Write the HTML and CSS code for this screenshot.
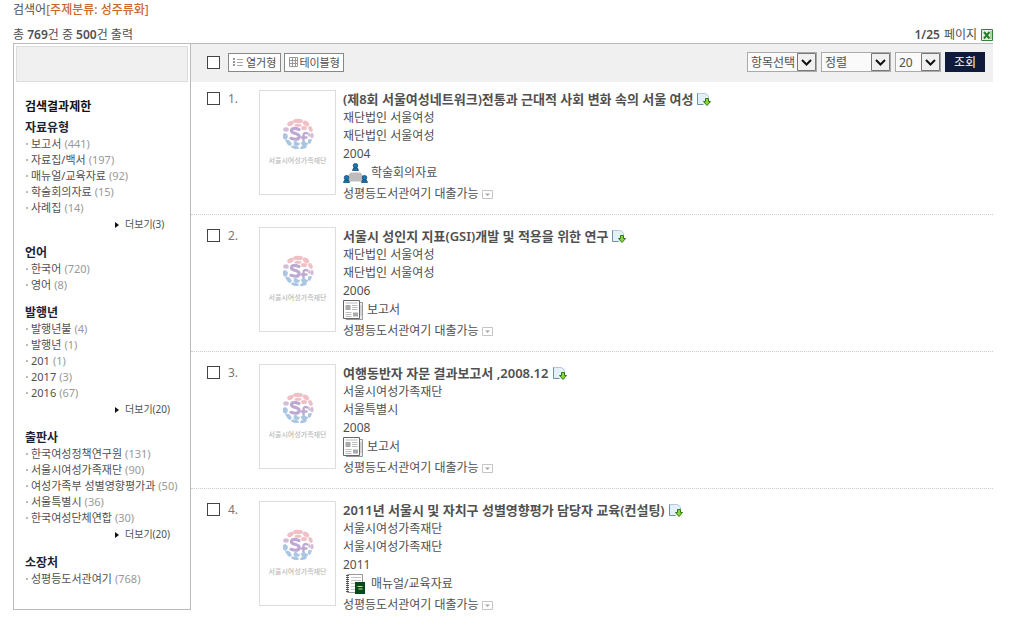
FILE: index.html
```html
<!DOCTYPE html>
<html lang="ko">
<head>
    <meta charset="UTF-8">
    <meta name="viewport" content="width=device-width, initial-scale=1.0">
    <title>검색결과</title>
    <link rel="stylesheet" href="styles.css">
</head>
<body>
    <!-- 아이콘 -->
    <svg class="sprite" aria-hidden="true">
        <symbol id="ico-export" viewBox="0 0 14 14">
            <path d="M.5 1.500h11v11H.5z" fill="#e3f0f8"/>
            <path d="M.5 1v11.500h6" fill="none" stroke="#6f8da5"/>
            <path d="M.5 1.500h8l3 3v2" fill="none" stroke="#b5cad8"/>
            <path d="M8.500 6.500h3v3h2l-3.500 4-3.500-4h2z" fill="#8bd63a" stroke="#2c7a12"/>
        </symbol>
        <symbol id="ico-down" viewBox="0 0 11 9">
            <path d="M.5.5h10v8H.5z" fill="#fff" stroke="#c4c4c4"/>
            <path d="M3 3.500h5L5.500 6z" fill="#a5a5a5"/>
        </symbol>
        <symbol id="ico-report" viewBox="0 0 21 20">
            <path d="M16 2.500h3.500v17H3" fill="#eee" stroke="#999"/>
            <path d="M.5.5h16v18H.5z" fill="#fff" stroke="#666"/>
            <path d="M2.500 5h5v5h-5zM10 12.500h5v4h-5z" fill="#aaa"/>
            <path d="M2.500 3h12M9 5.500h5.500M9 7.500h5.500M9 9.500h5.500M2.500 12.500h6M2.500 14.500h6M2.500 16.500h6M18 5v11" stroke="#bbb"/>
        </symbol>
        <symbol id="ico-meeting" viewBox="0 0 25 20">
            <path d="M7.500 9.500h10l4 5-2 4h-14l-2-4z" fill="#bdbdbd"/>
            <g id="person" fill="#1878b4" stroke="#0d3d62" stroke-width=".7">
                <path d="M9.500 7.500q.3-3 3-3t3 3z"/>
                <circle cx="12.500" cy="2.700" r="2.300"/>
            </g>
            <use href="#person" x="-9" y="12"/>
            <use href="#person" x="9" y="12"/>
        </symbol>
        <symbol id="ico-manual" viewBox="0 0 25 20">
            <path d="M4.500.5h15v18h-15z" fill="#fff" stroke="#999"/>
            <path d="M4.500 1v18" stroke="#555" stroke-width="3" stroke-dasharray="1 1"/>
            <path d="M8 3.500h10M8 6.500h10M8 9.500h4M8 12.500h4M8 15.500h4" stroke="#c4c4c4"/>
            <path d="M12 8h10v12H12z" fill="#064a1c"/>
            <path d="M14.500 12.500h5M15.500 15h4" stroke="#c8e08a"/>
        </symbol>
        <symbol id="logo" viewBox="0 0 32 32">
            <g fill="#f0c0c6">
                <ellipse cx="16" cy="3" rx="5" ry="2.200"/>
                <ellipse cx="8.500" cy="5.500" rx="3.500" ry="2.300" transform="rotate(-30 8.500 5.500)"/>
                <ellipse cx="24" cy="5.500" rx="3.500" ry="2.300" transform="rotate(35 24 5.500)"/>
                <ellipse cx="16" cy="7.300" rx="3.500" ry="1.500"/>
                <ellipse cx="22" cy="10" rx="3" ry="2"/>
                <ellipse cx="28.500" cy="11" rx="2" ry="3" transform="rotate(-25 28.500 11)"/>
            </g>
            <g fill="#d5bdd8">
                <ellipse cx="4" cy="11.500" rx="2.800" ry="2.200"/>
                <ellipse cx="30" cy="17.500" rx="1.600" ry="2.800"/>
                <path d="M27 14l1 2 1 1-1 2-2-1z"/>
            </g>
            <g fill="none" stroke="#bda9d3" stroke-width="3.200" stroke-linecap="round">
                <path d="M17 11.500q-7-2.500-7.500 1-.3 2 4 3 4.500 1.200 3.500 4-1.300 3-8 .8"/>
                <path d="M25.500 15.500q-4-1.500-4 2v5.500M19.500 19.500h5" stroke-width="2.400"/>
            </g>
            <g fill="#aac6e2">
                <path d="M1 16l2-1 2 1 1 2-1 3-2 1-2-2z"/>
                <path d="M3 22.500l3-1 2 1.500 2 3-2 2-2-1z"/>
                <path d="M12 23.500l2-1 1.500 2 2.500.5-1 2.500-3 .5-2.500-1.500z"/>
                <path d="M18.500 24.500l2-.5 1.500-1.500 2 2 2.500.5-1.500 2.500-3 1-2-1z"/>
                <path d="M26 21.500l3-.5 1 1-2 4-2-1z"/>
                <ellipse cx="13" cy="29.300" rx="4" ry="1.600" transform="rotate(10 13 29.300)"/>
                <ellipse cx="21.500" cy="29.300" rx="3.500" ry="1.500" transform="rotate(-18 21.500 29.300)"/>
            </g>
        </symbol>
    </svg>

    <p class="keyword">검색어<strong>[주제분류: 성주류화]</strong></p>
    <div class="summary">
        <p>총 <b>769</b>건 중 <b>500</b>건 출력</p>
        <p class="page-info"><b>1/25</b> 페이지
            <a href="#" aria-label="엑셀 저장"><svg class="ico-excel" viewBox="0 0 12 12"><path d="M.5.5h11v11H.5z" fill="#e2f3d9" stroke="#36803a"/><path d="M3 3l5.500 6.500M8.500 3L3 9.500" stroke="#2a7c2d" stroke-width="2"/><path d="M10 2v8" stroke="#7cb56e"/></svg></a>
        </p>
    </div>

    <div class="result-wrap">
        <aside class="sidebar">
            <div class="side-top"></div>
            <h2>검색결과제한</h2>
            <section class="facet">
                <h3>자료유형</h3>
                <ul>
                    <li><a href="#">보고서 <span>(441)</span></a></li>
                    <li><a href="#">자료집/백서 <span>(197)</span></a></li>
                    <li><a href="#">매뉴얼/교육자료 <span>(92)</span></a></li>
                    <li><a href="#">학술회의자료 <span>(15)</span></a></li>
                    <li><a href="#">사례집 <span>(14)</span></a></li>
                </ul>
                <a class="more" href="#">더보기(3)</a>
            </section>
            <section class="facet">
                <h3>언어</h3>
                <ul>
                    <li><a href="#">한국어 <span>(720)</span></a></li>
                    <li><a href="#">영어 <span>(8)</span></a></li>
                </ul>
            </section>
            <section class="facet">
                <h3>발행년</h3>
                <ul>
                    <li><a href="#">발행년불 <span>(4)</span></a></li>
                    <li><a href="#">발행년 <span>(1)</span></a></li>
                    <li><a href="#">201 <span>(1)</span></a></li>
                    <li><a href="#">2017 <span>(3)</span></a></li>
                    <li><a href="#">2016 <span>(67)</span></a></li>
                </ul>
                <a class="more" href="#">더보기(20)</a>
            </section>
            <section class="facet">
                <h3>출판사</h3>
                <ul>
                    <li><a href="#">한국여성정책연구원 <span>(131)</span></a></li>
                    <li><a href="#">서울시여성가족재단 <span>(90)</span></a></li>
                    <li><a href="#">여성가족부 성별영향평가과 <span>(50)</span></a></li>
                    <li><a href="#">서울특별시 <span>(36)</span></a></li>
                    <li><a href="#">한국여성단체연합 <span>(30)</span></a></li>
                </ul>
                <a class="more" href="#">더보기(20)</a>
            </section>
            <section class="facet">
                <h3>소장처</h3>
                <ul>
                    <li><a href="#">성평등도서관여기 <span>(768)</span></a></li>
                </ul>
            </section>
        </aside>

        <main class="content">
            <form class="toolbar">
                <input type="checkbox" aria-label="전체선택">
                <div class="view-type">
                    <button type="button"><svg class="ico-view" viewBox="0 0 11 10"><path d="M0 1h2v2H0zM0 4h2v2H0zM0 7h2v2H0z" fill="#999"/><path d="M4 2.500h6M4 5.500h6M4 8.500h6" stroke="#aaa"/></svg>열거형</button>
                    <button type="button"><svg class="ico-view" viewBox="0 0 11 10"><path d="M1.500.5h8v9h-8zM1.500 3.500h8M1.500 6.500h8M4.500.5v9M7.500.5v9" fill="none" stroke="#999"/></svg>테이블형</button>
                </div>
                <div class="sort">
                    <select class="sel-wide" aria-label="항목선택"><option>항목선택</option></select>
                    <select class="sel-wide" aria-label="정렬"><option>정렬</option></select>
                    <select class="sel-num" aria-label="출력건수"><option>20</option></select>
                    <button type="submit" class="btn-search">조회</button>
                </div>
            </form>

            <ol class="list">
                <li class="item">
                    <input type="checkbox" id="chk1">
                    <label class="num" for="chk1">1.</label>
                    <div class="thumb"><svg class="logo"><use href="#logo"/></svg><span>서울시여성가족재단</span></div>
                    <div class="info">
                        <h4><a href="#">(제8회 서울여성네트워크)전통과 근대적 사회 변화 속의 서울 여성</a><svg class="ico-export"><use href="#ico-export"/></svg></h4>
                        <p>재단법인 서울여성</p>
                        <p>재단법인 서울여성</p>
                        <p>2004</p>
                        <p class="type"><svg class="ico-wide"><use href="#ico-meeting"/></svg>학술회의자료</p>
                        <p class="status"><a href="#">성평등도서관여기 대출가능</a><svg class="ico-down"><use href="#ico-down"/></svg></p>
                    </div>
                </li>
                <li class="item">
                    <input type="checkbox" id="chk2">
                    <label class="num" for="chk2">2.</label>
                    <div class="thumb"><svg class="logo"><use href="#logo"/></svg><span>서울시여성가족재단</span></div>
                    <div class="info">
                        <h4><a href="#">서울시 성인지 지표(GSI)개발 및 적용을 위한 연구</a><svg class="ico-export"><use href="#ico-export"/></svg></h4>
                        <p>재단법인 서울여성</p>
                        <p>재단법인 서울여성</p>
                        <p>2006</p>
                        <p class="type"><svg class="ico-report"><use href="#ico-report"/></svg>보고서</p>
                        <p class="status"><a href="#">성평등도서관여기 대출가능</a><svg class="ico-down"><use href="#ico-down"/></svg></p>
                    </div>
                </li>
                <li class="item">
                    <input type="checkbox" id="chk3">
                    <label class="num" for="chk3">3.</label>
                    <div class="thumb"><svg class="logo"><use href="#logo"/></svg><span>서울시여성가족재단</span></div>
                    <div class="info">
                        <h4><a href="#">여행동반자 자문 결과보고서 ,2008.12</a><svg class="ico-export"><use href="#ico-export"/></svg></h4>
                        <p>서울시여성가족재단</p>
                        <p>서울특별시</p>
                        <p>2008</p>
                        <p class="type"><svg class="ico-report"><use href="#ico-report"/></svg>보고서</p>
                        <p class="status"><a href="#">성평등도서관여기 대출가능</a><svg class="ico-down"><use href="#ico-down"/></svg></p>
                    </div>
                </li>
                <li class="item">
                    <input type="checkbox" id="chk4">
                    <label class="num" for="chk4">4.</label>
                    <div class="thumb"><svg class="logo"><use href="#logo"/></svg><span>서울시여성가족재단</span></div>
                    <div class="info">
                        <h4><a href="#">2011년 서울시 및 자치구 성별영향평가 담당자 교육(컨설팅)</a><svg class="ico-export"><use href="#ico-export"/></svg></h4>
                        <p>서울시여성가족재단</p>
                        <p>서울시여성가족재단</p>
                        <p>2011</p>
                        <p class="type"><svg class="ico-wide"><use href="#ico-manual"/></svg>매뉴얼/교육자료</p>
                        <p class="status"><a href="#">성평등도서관여기 대출가능</a><svg class="ico-down"><use href="#ico-down"/></svg></p>
                    </div>
                </li>
            </ol>
        </main>
    </div>
</body>
</html>
```

FILE: styles.css
```css
* {
    box-sizing: border-box;
    margin: 0;
    padding: 0;
}
body {
    padding: 1px 17px 0 13px;
    font-family: "Noto Sans", "Noto Sans CJK KR", sans-serif;
    font-size: 12px;
    line-height: 18px;
    color: #505050;
    background: #fff;
}
a {
    color: inherit;
    text-decoration: none;
}
ul, ol {
    list-style: none;
}
svg {
    flex: none;
}
button, select {
    font-family: inherit;
    font-size: 12px;
    color: #505050;
}
.sprite {
    display: none;
}
.keyword strong {
    color: #c9682f;
    font-weight: 500;
}
.summary {
    display: flex;
    justify-content: space-between;
    padding-top: 7px;
    line-height: 17px;
}
.summary b {
    font-weight: 600;
}
.page-info {
    display: flex;
    align-items: center;
    gap: 4px;
}
.ico-excel {
    display: block;
    width: 12px;
    height: 12px;
}
.result-wrap {
    display: flex;
    align-items: flex-start;
    border-top: 1px solid #bbb;
}

/* 왼쪽 제한검색 */
.sidebar {
    width: 178px;
    flex: none;
    padding: 2px 2px 22px;
    border: 1px solid #bbb;
    border-top: 0;
}
.side-top {
    height: 36px;
    background: #f0f0f0;
    border: 1px solid #ddd;
}
.sidebar h2, .facet h3 {
    padding-left: 9px;
    font-size: 12px;
    line-height: 16px;
    font-weight: 600;
}
.sidebar h2 {
    margin: 17px 0 5px;
    color: #111;
}
.facet + .facet {
    margin-top: 12px;
}
.facet h3 {
    color: #1a2233;
}
.facet li {
    padding-left: 10px;
    font-size: 11px;
    line-height: 16px;
    white-space: nowrap;
}
.facet li a {
    display: flex;
    align-items: center;
    gap: 3px;
}
.facet li a::before {
    content: "";
    width: 2px;
    height: 2px;
    background: #bbb;
}
.facet li span {
    color: #999;
}
.more {
    display: flex;
    align-items: center;
    gap: 6px;
    margin-left: 99px;
    font-size: 10px;
    line-height: 17px;
}
.more::before {
    content: "";
    border: 3px solid transparent;
    border-left: 4px solid #111;
    border-right: 0;
}

/* 상단 툴바 */
.content {
    flex: 1;
    min-width: 0;
}
.toolbar {
    display: flex;
    align-items: center;
    gap: 8px;
    height: 38px;
    padding: 0 8px 2px 16px;
    background: #f0f0f0;
}
input[type="checkbox"] {
    appearance: none;
    width: 13px;
    height: 13px;
    border: 1px solid #444;
    background: #fff;
}
input[type="checkbox"]:checked {
    background: #444;
}
.view-type {
    display: flex;
    gap: 3px;
}
.view-type button {
    display: flex;
    align-items: center;
    gap: 2px;
    height: 19px;
    padding: 0 4px;
    border: 1px solid #888;
    background: #fff;
    font-size: 11px;
}
.view-type button + button {
    gap: 0;
    padding: 0 3px;
}
.ico-view {
    width: 11px;
    height: 10px;
}
.sort {
    display: flex;
    gap: 4px;
    margin-left: auto;
}
.sort select {
    appearance: none;
    height: 20px;
    padding: 0 20px 0 3px;
    border: 1px solid #aaa;
    border-radius: 0;
    background: #fafafa url("data:image/svg+xml,%3Csvg xmlns='http://www.w3.org/2000/svg' width='19' height='18'%3E%3Cpath d='M.5.5h18v17H.5z' fill='%23f0f0f0' stroke='%23777'/%3E%3Cpath d='M5 7l4.500 4.500L14 7' fill='none' stroke='%23111' stroke-width='2'/%3E%3C/svg%3E") right center no-repeat;
}
.sel-wide {
    width: 70px;
}
.sort .sel-num {
    width: 46px;
}
.btn-search {
    width: 40px;
    height: 20px;
    border: 0;
    background: #101a3a;
    color: #fff;
}

/* 결과 목록 */
.item {
    display: flex;
    align-items: flex-start;
    padding: 12px 0 10px 16px;
    border-bottom: 1px dotted #ccc;
}
.item:first-child {
    padding-top: 8px;
}
.item:last-child {
    border-bottom: 0;
}
.item input {
    margin: 2px 8px 0 0;
}
.num {
    width: 31px;
    color: #777;
}
.thumb {
    display: flex;
    flex-direction: column;
    align-items: center;
    width: 77px;
    height: 105px;
    margin-right: 7px;
    padding-top: 27px;
    border: 1px solid #ddd;
}
.thumb span {
    margin-top: 3px;
    font-size: 7px;
    line-height: 16px;
    font-weight: 500;
    color: #bbb;
    white-space: nowrap;
}
.logo {
    width: 32px;
    height: 32px;
}
.info {
    flex: 1;
    min-width: 0;
}
.info h4 {
    display: flex;
    align-items: center;
    gap: 4px;
    margin-bottom: 1px;
    font-size: 13px;
    font-weight: 600;
}
.ico-export {
    width: 14px;
    height: 14px;
}
.info .type, .info .status {
    display: flex;
    align-items: center;
    gap: 3px;
    line-height: 20px;
}
.info .status {
    margin-top: 1px;
}
.ico-wide {
    width: 25px;
    height: 20px;
}
.ico-report {
    width: 21px;
    height: 20px;
}
.ico-down {
    width: 11px;
    height: 9px;
}
```
